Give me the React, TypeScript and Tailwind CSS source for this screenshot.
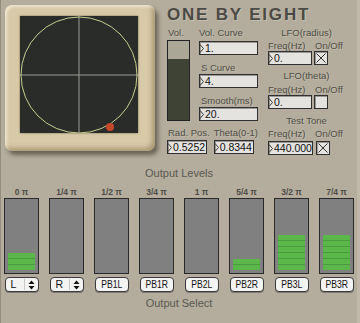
import React from "react";

const font = "font-['Liberation_Sans',Arial,sans-serif]";
const label =
  "text-[9.5px] leading-[11px] h-[11px] text-[#504e47] whitespace-nowrap [text-shadow:1px_1px_0_rgba(220,214,200,0.35)]";

function NumBox({ value, width }: { value: string; width: string }) {
  return (
    <div
      className={`${width} h-[14px] flex items-center bg-[#e4e3df] border border-[#2f2f2f] shadow-[inset_1px_1px_0_#9a9994] overflow-hidden`}
    >
      <svg width="4" height="9" className="shrink-0">
        <path d="M0 0.5 L3.5 4.5 L0 8.5" fill="none" stroke="#3a3a3a" strokeWidth="1" />
      </svg>
      <span className="ml-[1px] text-[10.5px] leading-none text-[#111] whitespace-nowrap">{value}</span>
    </div>
  );
}

function Toggle({ on }: { on: boolean }) {
  return (
    <div className="w-[14px] h-[14px] bg-[#e4e3df] border border-[#2f2f2f] shadow-[inset_1px_1px_0_#9a9994] flex items-center justify-center">
      {on && (
        <svg width="12" height="12">
          <path d="M1.5 1.5 L10.5 10.5 M10.5 1.5 L1.5 10.5" stroke="#333" strokeWidth="1" />
        </svg>
      )}
    </div>
  );
}

function Arrows() {
  return (
    <svg width="7" height="10" className="shrink-0">
      <path d="M3.5 0.5 L6.5 4 L0.5 4 Z" fill="#111" />
      <path d="M3.5 9.5 L6.5 6 L0.5 6 Z" fill="#111" />
    </svg>
  );
}

function Menu({ text, arrows }: { text: string; arrows?: boolean }) {
  return (
    <div className="w-[34px] h-[15px] rounded-[4px] border border-[#3a3a3a] bg-[#f3f3f1] shadow-[0_1px_0_#7d7a70] flex items-center overflow-hidden">
      {arrows ? (
        <>
          <span className="pl-[5px] w-[19px] text-[10.5px] leading-none text-[#111] border-r border-[#c8c8c4]">{text}</span>
          <span className="flex-1 flex justify-center">
            <Arrows />
          </span>
        </>
      ) : (
        <span className="w-full flex justify-center">
          <span className="inline-block text-[10.5px] leading-none text-[#111] scale-x-[0.82]">{text}</span>
        </span>
      )}
    </div>
  );
}

const meters = [
  { label: "0 π", segs: 3, menu: "L", arrows: true },
  { label: "1/4 π", segs: 0, menu: "R", arrows: true },
  { label: "1/2 π", segs: 0, menu: "PB1L" },
  { label: "3/4 π", segs: 0, menu: "PB1R" },
  { label: "1 π", segs: 0, menu: "PB2L" },
  { label: "5/4 π", segs: 2, menu: "PB2R" },
  { label: "3/2 π", segs: 6, menu: "PB3L" },
  { label: "7/4 π", segs: 6, menu: "PB3R" },
];

function Joystick() {
  return (
    <div className="w-[150px] h-[146px] rounded-[7px] bg-[#d8caa8] pl-[15px] pt-[11px] shadow-[inset_2px_2px_3px_rgba(255,250,230,0.6),inset_-3px_-3px_5px_rgba(110,90,55,0.45),3px_4px_4px_rgba(45,38,25,0.55)]">
      <div className="w-[118px] h-[117px] bg-[#2a2c29] shadow-[0_0_2px_rgba(60,45,20,0.6)]">
        <svg width="118" height="117">
          <line x1="59" y1="0" x2="59" y2="117" stroke="#9a9b96" strokeWidth="1" />
          <line x1="0" y1="59" x2="118" y2="59" stroke="#9a9b96" strokeWidth="1" />
          <circle cx="59" cy="59" r="58" fill="none" stroke="#c6d090" strokeWidth="1" />
          <circle cx="90" cy="111" r="4" fill="#c4462b" />
        </svg>
      </div>
    </div>
  );
}

export default function App() {
  return (
    <div className={`${font} w-[360px] h-[323px] bg-[#b4ad9d] border-l border-[#948d7e] border-r-[3px] border-r-[#c0b9aa] overflow-hidden`}>
      {/* top */}
      <div className="h-[160px] flex pt-[5px] pl-[4px]">
        <Joystick />
        <div className="ml-[12px] flex flex-col">
          <div className="mt-[1px] h-[17px] text-[17px] leading-[17px] font-bold tracking-[1.8px] text-[#4b4a44] [text-shadow:1px_1px_0_rgba(230,225,210,0.35)] whitespace-nowrap">
            ONE BY EIGHT
          </div>
          <div className="flex">
            <div className="w-[91px] flex flex-col">
              <div className="flex">
                <div className="w-[23px] flex flex-col">
                  <div className={`mt-[4px] pl-[1px] ${label}`}>Vol.</div>
                  <div className="mt-[2px] h-[81px] w-[23px] border border-[#222] flex flex-col">
                    <div className="h-[18px] bg-[#aaa797]" />
                    <div className="flex-1 bg-[#3e4335]" />
                  </div>
                </div>
                <div className="ml-[9px] w-[59px] flex flex-col">
                  <div className={`mt-[4px] ${label}`}>Vol. Curve</div>
                  <div className="mt-[3px]">
                    <NumBox value="1." width="w-[59px]" />
                  </div>
                  <div className={`mt-[7px] pl-[2px] ${label}`}>S Curve</div>
                  <div className="mt-[1px]">
                    <NumBox value="4." width="w-[59px]" />
                  </div>
                  <div className={`mt-[7px] pl-[2px] ${label}`}>Smooth(ms)</div>
                  <div className="mt-[1px]">
                    <NumBox value="20." width="w-[59px]" />
                  </div>
                </div>
              </div>
              <div className="flex mt-[6px]">
                <div className="w-[50px] flex flex-col">
                  <div className={`pl-[1px] ${label}`}>Rad. Pos.</div>
                  <div className="mt-[2px]">
                    <NumBox value="0.5252" width="w-[40px]" />
                  </div>
                </div>
                <div className="flex flex-col">
                  <div className={label}>Theta(0-1)</div>
                  <div className="mt-[2px]">
                    <NumBox value="0.8344" width="w-[40px]" />
                  </div>
                </div>
              </div>
            </div>
            <div className="ml-[10px] w-[77px] flex flex-col">
              <div className={`mt-[4px] text-center ${label}`}>LFO(radius)</div>
              <div className={`mt-[2px] flex ${label}`}>
                <span className="w-[47px]">Freq(Hz)</span>
                <span>On/Off</span>
              </div>
              <div className="flex gap-[2px]">
                <NumBox value="0." width="w-[44px]" />
                <Toggle on />
              </div>
              <div className={`mt-[5px] text-center ${label}`}>LFO(theta)</div>
              <div className={`mt-[3px] flex ${label}`}>
                <span className="w-[47px]">Freq(Hz)</span>
                <span>On/Off</span>
              </div>
              <div className="flex gap-[2px]">
                <NumBox value="0." width="w-[44px]" />
                <Toggle on={false} />
              </div>
              <div className={`mt-[6px] text-center ${label}`}>Test Tone</div>
              <div className={`mt-[2px] flex ${label}`}>
                <span className="w-[47px]">Freq(Hz)</span>
                <span>On/Off</span>
              </div>
              <div className="mt-[2px] flex gap-[3px]">
                <NumBox value="440.000" width="w-[45px]" />
                <Toggle on />
              </div>
            </div>
          </div>
        </div>
      </div>

      {/* outputs */}
      <div className="flex flex-col">
        <div className="mt-[8px] text-center text-[11px] leading-[11px] h-[11px] text-[#5a5852]">Output Levels</div>
        <div className="mt-[9px] flex gap-[10px] pl-[3px]">
          {meters.map((m) => (
            <div key={m.menu} className="w-[35px] flex flex-col items-center">
              <div className="h-[8px] text-[8.5px] leading-[8px] font-bold text-[#4e4c46] whitespace-nowrap">{m.label}</div>
              <div className="mt-[2px] w-[35px] h-[76px] bg-[#808080] border border-[#2a2a2a] p-[3px] flex flex-col justify-end">
                {m.segs > 0 && (
                  <div className="flex flex-col gap-[1px] bg-[#4b9a3f]">
                    {Array.from({ length: m.segs }).map((_, i) => (
                      <div key={i} className="h-[5px] bg-[#5cb74a]" />
                    ))}
                  </div>
                )}
              </div>
              <div className="mt-[3px]">
                <Menu text={m.menu} arrows={m.arrows} />
              </div>
            </div>
          ))}
        </div>
        <div className="mt-[6px] text-center text-[11px] leading-[11px] h-[11px] text-[#5a5852]">Output Select</div>
      </div>
    </div>
  );
}
